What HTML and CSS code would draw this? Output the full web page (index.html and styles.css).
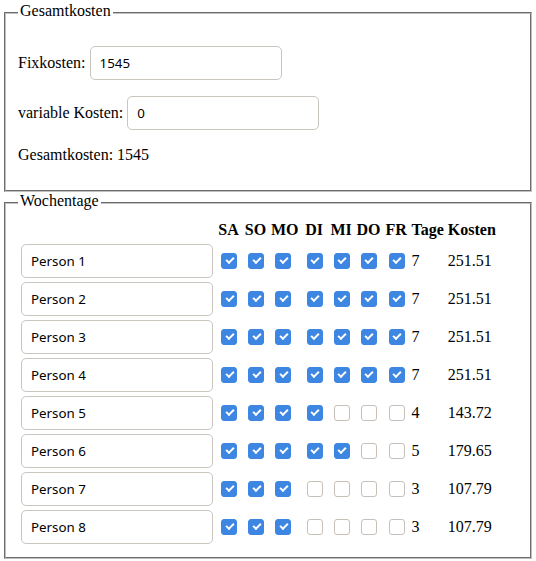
FILE: index.html
```html
<!DOCTYPE html>
<html lang="de">
<head>
<meta charset="utf-8">
<title>Kostenaufteilung</title>
<link rel="stylesheet" href="styles.css">
</head>
<body>
<fieldset class="group">
  <legend>Gesamtkosten</legend>
  <p class="line"><label>Fixkosten: <input class="field" type="text" value="1545"></label></p>
  <p class="line"><label>variable Kosten: <input class="field" type="text" value="0"></label></p>
  <p class="line">Gesamtkosten: 1545</p>
</fieldset>
<fieldset class="group">
  <legend>Wochentage</legend>
  <table class="days">
    <thead>
      <tr><th></th><th>SA</th><th>SO</th><th>MO</th><th>DI</th><th>MI</th><th>DO</th><th>FR</th><th>Tage</th><th>Kosten</th></tr>
    </thead>
    <tbody>
      <tr><td><input class="field" type="text" value="Person 1"></td>
        <td><input class="day" type="checkbox" checked></td><td><input class="day" type="checkbox" checked></td><td><input class="day" type="checkbox" checked></td><td><input class="day" type="checkbox" checked></td><td><input class="day" type="checkbox" checked></td><td><input class="day" type="checkbox" checked></td><td><input class="day" type="checkbox" checked></td>
        <td>7</td><td>251.51</td></tr>
      <tr><td><input class="field" type="text" value="Person 2"></td>
        <td><input class="day" type="checkbox" checked></td><td><input class="day" type="checkbox" checked></td><td><input class="day" type="checkbox" checked></td><td><input class="day" type="checkbox" checked></td><td><input class="day" type="checkbox" checked></td><td><input class="day" type="checkbox" checked></td><td><input class="day" type="checkbox" checked></td>
        <td>7</td><td>251.51</td></tr>
      <tr><td><input class="field" type="text" value="Person 3"></td>
        <td><input class="day" type="checkbox" checked></td><td><input class="day" type="checkbox" checked></td><td><input class="day" type="checkbox" checked></td><td><input class="day" type="checkbox" checked></td><td><input class="day" type="checkbox" checked></td><td><input class="day" type="checkbox" checked></td><td><input class="day" type="checkbox" checked></td>
        <td>7</td><td>251.51</td></tr>
      <tr><td><input class="field" type="text" value="Person 4"></td>
        <td><input class="day" type="checkbox" checked></td><td><input class="day" type="checkbox" checked></td><td><input class="day" type="checkbox" checked></td><td><input class="day" type="checkbox" checked></td><td><input class="day" type="checkbox" checked></td><td><input class="day" type="checkbox" checked></td><td><input class="day" type="checkbox" checked></td>
        <td>7</td><td>251.51</td></tr>
      <tr><td><input class="field" type="text" value="Person 5"></td>
        <td><input class="day" type="checkbox" checked></td><td><input class="day" type="checkbox" checked></td><td><input class="day" type="checkbox" checked></td><td><input class="day" type="checkbox" checked></td><td><input class="day" type="checkbox"></td><td><input class="day" type="checkbox"></td><td><input class="day" type="checkbox"></td>
        <td>4</td><td>143.72</td></tr>
      <tr><td><input class="field" type="text" value="Person 6"></td>
        <td><input class="day" type="checkbox" checked></td><td><input class="day" type="checkbox" checked></td><td><input class="day" type="checkbox" checked></td><td><input class="day" type="checkbox" checked></td><td><input class="day" type="checkbox" checked></td><td><input class="day" type="checkbox"></td><td><input class="day" type="checkbox"></td>
        <td>5</td><td>179.65</td></tr>
      <tr><td><input class="field" type="text" value="Person 7"></td>
        <td><input class="day" type="checkbox" checked></td><td><input class="day" type="checkbox" checked></td><td><input class="day" type="checkbox" checked></td><td><input class="day" type="checkbox"></td><td><input class="day" type="checkbox"></td><td><input class="day" type="checkbox"></td><td><input class="day" type="checkbox"></td>
        <td>3</td><td>107.79</td></tr>
      <tr><td><input class="field" type="text" value="Person 8"></td>
        <td><input class="day" type="checkbox" checked></td><td><input class="day" type="checkbox" checked></td><td><input class="day" type="checkbox" checked></td><td><input class="day" type="checkbox"></td><td><input class="day" type="checkbox"></td><td><input class="day" type="checkbox"></td><td><input class="day" type="checkbox"></td>
        <td>3</td><td>107.79</td></tr>
    </tbody>
  </table>
</fieldset>
<fieldset class="group">
  <legend>Daten</legend>
  <p class="line">Speichern und Laden der Eingaben</p>
</fieldset>
</body>
</html>
```
FILE: styles.css
```css
html {
  overflow: hidden;
}
body {
  margin: 2px;
  font-family: "Liberation Serif", "Times New Roman", serif;
  font-size: 16px;
  color: #000;
  background: #fff;
}
.group {
  margin: 0 2px;
  padding: 0.35em 0.75em 0.625em;
  border: 2px groove #c0c0c0;
}
.group legend {
  padding: 0 2px 4px;
}
.line {
  margin: 16px 0;
}
.field {
  box-sizing: border-box;
  width: 192px;
  height: 34px;
  margin: 0;
  padding: 0 9px;
  border: 1px solid #cbc5bf;
  border-radius: 5px;
  background: #fff;
  font-family: "Noto Sans", "Open Sans", sans-serif;
  font-size: 13.33px;
  color: #000;
}
.days {
  border-spacing: 2px;
}
.days th {
  padding: 0 1px 2px;
}
.days td {
  padding: 1px;
}
.day {
  appearance: none;
  -webkit-appearance: none;
  position: relative;
  box-sizing: border-box;
  width: 16px;
  height: 16px;
  margin: 3px 3px 3px 4px;
  border: 1px solid #c6c0b9;
  border-radius: 3px;
  background: #fff;
  vertical-align: middle;
}
.day:checked {
  background: #3d86e1;
  border-color: #3d86e1;
}
.day:checked::after {
  content: "";
  position: absolute;
  left: 3.5px;
  top: 3px;
  width: 6px;
  height: 3px;
  border-left: 2px solid #fff;
  border-bottom: 2px solid #fff;
  transform: rotate(-45deg);
}
```
